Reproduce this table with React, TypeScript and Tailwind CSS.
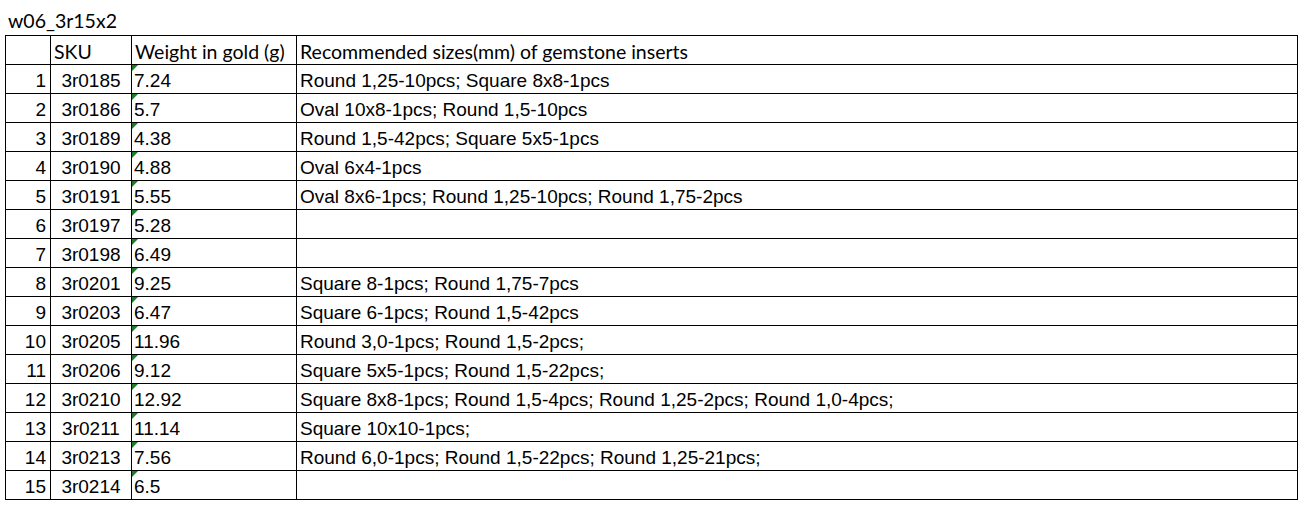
import React from "react";

type Row = { sku: string; weight: string; sizes: string };

const ROWS: Row[] = [
  { sku: "3r0185", weight: "7.24", sizes: "Round 1,25-10pcs; Square 8x8-1pcs" },
  { sku: "3r0186", weight: "5.7", sizes: "Oval 10x8-1pcs; Round 1,5-10pcs" },
  { sku: "3r0189", weight: "4.38", sizes: "Round 1,5-42pcs; Square 5x5-1pcs" },
  { sku: "3r0190", weight: "4.88", sizes: "Oval 6x4-1pcs" },
  { sku: "3r0191", weight: "5.55", sizes: "Oval 8x6-1pcs; Round 1,25-10pcs; Round 1,75-2pcs" },
  { sku: "3r0197", weight: "5.28", sizes: "" },
  { sku: "3r0198", weight: "6.49", sizes: "" },
  { sku: "3r0201", weight: "9.25", sizes: "Square 8-1pcs; Round 1,75-7pcs" },
  { sku: "3r0203", weight: "6.47", sizes: "Square 6-1pcs; Round 1,5-42pcs" },
  { sku: "3r0205", weight: "11.96", sizes: "Round 3,0-1pcs; Round 1,5-2pcs;" },
  { sku: "3r0206", weight: "9.12", sizes: "Square 5x5-1pcs; Round 1,5-22pcs;" },
  { sku: "3r0210", weight: "12.92", sizes: "Square 8x8-1pcs; Round 1,5-4pcs; Round 1,25-2pcs; Round 1,0-4pcs;" },
  { sku: "3r0211", weight: "11.14", sizes: "Square 10x10-1pcs;" },
  { sku: "3r0213", weight: "7.56", sizes: "Round 6,0-1pcs; Round 1,5-22pcs; Round 1,25-21pcs;" },
  { sku: "3r0214", weight: "6.5", sizes: "" },
];

// Calibri isn't installed; Lato is the nearest humanist stand-in.
const calibri = "font-['Lato','Open_Sans',sans-serif]";
const arial = "font-['Liberation_Sans',Arial,sans-serif]";

const cell = "border border-black h-[29px] align-bottom pb-[1px] leading-[22px] whitespace-nowrap overflow-hidden";

export default function App() {
  return (
    <div className="w-[1305px] h-[505px] bg-white text-black">
      <div className={`${calibri} text-[19.5px] leading-[22px] pl-[8px] pt-[10px] h-[35px]`}>w06_3r15x2</div>
      <table className="ml-[5px] border-collapse table-fixed w-[1292px]">
        <colgroup>
          <col className="w-[45px]" />
          <col className="w-[81px]" />
          <col className="w-[165px]" />
          <col className="w-[1001px]" />
        </colgroup>
        <thead>
          <tr className={`${calibri} text-[19.5px]`}>
            <th className={`${cell} font-normal`} />
            <th className={`${cell} font-normal text-left pl-[3px]`}>SKU</th>
            <th className={`${cell} font-normal text-left pl-[3px]`}>Weight in gold (g)</th>
            <th className={`${cell} font-normal text-left pl-[3px]`}>Recommended sizes(mm) of gemstone inserts</th>
          </tr>
        </thead>
        <tbody className={`${arial} text-[19px]`}>
          {ROWS.map((r, i) => (
            <tr key={r.sku}>
              <td className={`${cell} text-right pr-[4px]`}>{i + 1}</td>
              <td className={`${cell} text-center`}>{r.sku}</td>
              <td className={`${cell} relative text-left pl-[2px]`}>
                <span className="absolute left-0 top-0 w-0 h-0 border-t-[6px] border-r-[6px] border-t-[#1f7a2c] border-r-transparent" />
                {r.weight}
              </td>
              <td className={`${cell} text-left pl-[3px]`}>{r.sizes}</td>
            </tr>
          ))}
        </tbody>
      </table>
    </div>
  );
}
